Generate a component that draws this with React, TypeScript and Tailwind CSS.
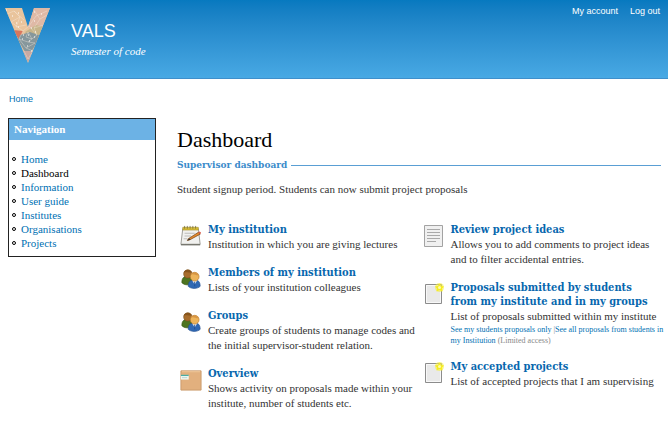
import type { ReactNode } from "react";

const serif = "font-['Liberation_Serif','Times_New_Roman',serif]";
const wideSerif = "font-['DejaVu_Serif_Condensed','DejaVu_Serif',serif]";
const sans = "font-['Liberation_Sans',Arial,sans-serif]";

function Logo() {
  return (
    <svg viewBox="0 0 46 56" className="mt-2 h-[56px] w-[46px] shrink-0" role="img" aria-label="VALS logo">
      <defs>
        <clipPath id="vee">
          <path d="M0 0H17L23 19L29 0H45L23 55Z" />
        </clipPath>
      </defs>
      <g clipPath="url(#vee)">
        <path d="M0 0H46V56H0Z" fill="#e9c49c" />
        <path d="M23 0H46V19L28 24L23 19Z" fill="#dfb9a6" />
        <path d="M20 24L31 17L40 19L34 30L22 27Z" fill="#c6b48a" />
        <path d="M8 22L18 23L14 32Z" fill="#d8765d" />
        <path d="M15 27L25 24L36 28L26 44L20 44L13 32Z" fill="#86979c" />
        <path d="M18 43H28L23 55Z" fill="#c8a9a2" />
        <path
          d="M2 6L9 3L15 9L6 14ZM15 9L11 19L21 17M6 14L18 23L24 18L31 8L42 3M9 3L19 12M29 2L35 11L42 7M35 11L29 20L39 17M18 23L14 31L23 34L32 27L24 18M29 20L32 27M14 31L21 40L30 35L23 34M21 40L28 43L23 51L19 43M23 24L27 31L21 29Z"
          fill="none"
          stroke="#f8eee2"
          strokeWidth="0.6"
          opacity="0.6"
        />
        <path
          d="M1 2h1m5 6h1m5-3h1m-3 10h1m4-1h1m-4 5h1m15-15h1m6 2h1m-8 7h1m-4 7h1m3 4h1m-13 3h1m4 0h1m-7 4h1m6 2h1m4-4h1m-8 9h1m3 5h1"
          stroke="#fff"
          strokeWidth="1"
        />
      </g>
    </svg>
  );
}

function NotepadIcon() {
  return (
    <svg viewBox="0 0 24 24" className="size-[22px]" aria-hidden="true">
      <path d="M3 4H20L22 21H1Z" fill="#f1f1ef" stroke="#96968f" />
      <path d="M1 21.500H22" stroke="#77776f" strokeWidth="1.5" />
      <path d="M3 2.500H20V5.500H3Z" fill="#d8bd35" stroke="#a18b28" strokeWidth="0.6" />
      <path d="M5 1v3m3-3v3m3-3v3m3-3v3m3-3v3" stroke="#6e6637" strokeWidth="0.8" />
      <path d="M5 9H16M5 12H12M4 15H8" stroke="#b7b7b3" />
      <path d="M9 15L20 8L22 10L11 16L8 17Z" fill="#e58a2c" stroke="#784a20" strokeWidth="0.8" />
      <path d="M20 8L22 10L23 8.500L21.500 7Z" fill="#d85a48" />
      <path d="M8 17L10 14.500L11.500 16Z" fill="#333" />
    </svg>
  );
}

function PeopleIcon() {
  return (
    <svg viewBox="0 0 24 24" className="size-[22px]" aria-hidden="true">
      <path d="M2 16C2 10 5 9 8 9C12 9 14 12 14 17C10 19 5 19 2 16Z" fill="#4d7420" stroke="#34540f" strokeWidth="0.7" />
      <circle cx="8.500" cy="6.500" r="4.500" fill="#a86d2c" stroke="#79501d" strokeWidth="0.7" />
      <path d="M4 5C5 1 12 1 13 5C9 5 7 4 4 5Z" fill="#87551c" />
      <path d="M9 20C9 15 11 13 16 13C20 13 22 15 22 20C19 23 12 23 9 20Z" fill="#2f68b3" stroke="#234e8e" strokeWidth="0.7" />
      <path d="M13 13L16 18L19 13Z" fill="#eef4fb" />
      <path d="M16 15V20" stroke="#214d91" />
      <circle cx="16" cy="9.500" r="4.800" fill="#edb45a" stroke="#b7772b" strokeWidth="0.7" />
      <path d="M12 7C13 4 19 4 20 8C17 8 15 6 12 7Z" fill="#d79543" />
    </svg>
  );
}

function FolderIcon() {
  return (
    <svg viewBox="0 0 24 24" className="size-[22px]" aria-hidden="true">
      <path d="M1 2H23V23H1Z" fill="#e2b07e" stroke="#c99a6c" />
      <path d="M2 3H22" stroke="#f0c99f" />
      <path d="M1 6.500H9.500V11.500H1Z" fill="#f4faf6" />
      <path d="M1 7H9.500" stroke="#4bada5" strokeWidth="1.4" />
      <path d="M2 9.500H8" stroke="#b5cfc9" />
    </svg>
  );
}

function DocumentIcon() {
  return (
    <svg viewBox="0 0 22 22" className="size-[22px]" aria-hidden="true">
      <path d="M1.500 0.500H19.500V21.500H1.500Z" fill="#f0f0f0" stroke="#a3a3a3" />
      <path d="M4 4.500H17M4 7.500H17M4 10.500H17M4 13.500H17M4 16.500H13" stroke="#a9a9a9" />
    </svg>
  );
}

function NewPageIcon() {
  return (
    <svg viewBox="0 0 22 22" className="size-[22px] overflow-visible" aria-hidden="true">
      <path d="M2.500 1.500H18.500V20.500H2.500Z" fill="#e9e9e9" stroke="#8c8c8c" />
      <path d="M3.500 2.500H17.500V19.500H3.500Z" fill="none" stroke="#f8f8f8" />
      <circle cx="16.500" cy="4.500" r="4.500" fill="#f5ef45" opacity="0.6" />
      <path d="M16.500 0.500L18 3L21 3.500L19 5.500L19.500 8.500L16.500 7L13.500 8.500L14 5.500L12 3.500L15 3Z" fill="#f5ec22" />
      <circle cx="16.500" cy="4.500" r="1.500" fill="#fdfbb0" />
    </svg>
  );
}

function Item({ icon, title, children }: { icon: ReactNode; title: string; children: ReactNode }) {
  return (
    <li className="flex gap-1.5">
      <span className="w-[22px] shrink-0 pt-0.5">{icon}</span>
      <div className="min-w-0">
        <h3 className={`max-w-[208px] text-[11px] leading-[14px] font-bold ${wideSerif}`}>
          <a href="#" className="text-[#0767ae]">{title}</a>
        </h3>
        {children}
      </div>
    </li>
  );
}

function Desc({ children }: { children: ReactNode }) {
  return <p className="text-[11px] leading-[15px]">{children}</p>;
}

const links = ["Home", "Dashboard", "Information", "User guide", "Institutes", "Organisations", "Projects"];

export default function App() {
  return (
    <div className={`min-h-screen bg-white text-[#333] ${serif}`}>
      <header className="flex h-[79px] items-start border-b border-[#3f8fcb] bg-linear-to-b from-[#0779bf] to-[#48a9e4] pr-2 pl-[5px] text-white">
        <Logo />
        <div className="ml-5 pt-5">
          <h1 className={`text-[18px] leading-[22px] ${sans}`}>VALS</h1>
          <p className="text-[11px] leading-[18px] italic">Semester of code</p>
        </div>
        <nav aria-label="Account" className={`ml-auto flex gap-3 pt-1 text-[9px] leading-[14px] ${sans}`}>
          <a href="#">My account</a>
          <a href="#">Log out</a>
        </nav>
      </header>

      <nav aria-label="Breadcrumb" className={`px-[9px] pt-[13px] text-[9px] leading-[14px] text-[#0071b3] ${sans}`}>
        <a href="#">Home</a>
      </nav>

      <div className="flex gap-[21px] pt-3 pr-[3px] pl-2">
        <aside className="w-[148px] shrink-0 self-start border border-[#222]">
          <h2 className="bg-[#6cb2e5] px-[5px] text-[11px] leading-[21px] font-bold text-white">Navigation</h2>
          <ul className="pt-3 pb-1.5 text-[11px]">
            {links.map((label) => (
              <li key={label} className="flex h-[14px] items-center gap-[5px] pl-[3px] leading-[14px]">
                <span className="size-1 rounded-full border border-black" />
                <a href="#" className={label === "Dashboard" ? "text-black" : "text-[#0071b3]"}>{label}</a>
              </li>
            ))}
          </ul>
        </aside>

        <main className="min-w-0 flex-1 pt-2">
          <h1 className="text-[22px] leading-7 text-black">Dashboard</h1>
          <div className="mt-1 mr-1 flex items-center gap-1">
            <h2 className={`text-[10px] leading-[14px] font-bold text-[#3a8bca] ${wideSerif}`}>Supervisor dashboard</h2>
            <span className="h-px flex-1 bg-[#5a9fd4]" />
          </div>
          <p className="mt-[10px] text-[11px] leading-[15px]">
            Student signup period. Students can now submit project proposals
          </p>

          <div className="mt-[26px] grid grid-cols-2 pl-[3px]">
            <ul className="flex flex-col gap-[14px]">
              <Item icon={<NotepadIcon />} title="My institution">
                <Desc>Institution in which you are giving lectures</Desc>
              </Item>
              <Item icon={<PeopleIcon />} title="Members of my institution">
                <Desc>Lists of your institution colleagues</Desc>
              </Item>
              <Item icon={<PeopleIcon />} title="Groups">
                <Desc>Create groups of students to manage codes and the initial supervisor-student relation.</Desc>
              </Item>
              <Item icon={<FolderIcon />} title="Overview">
                <Desc>Shows activity on proposals made within your institute, number of students etc.</Desc>
              </Item>
            </ul>
            <ul className="flex flex-col gap-[14px]">
              <Item icon={<DocumentIcon />} title="Review project ideas">
                <Desc>Allows you to add comments to project ideas and to filter accidental entries.</Desc>
              </Item>
              <Item icon={<NewPageIcon />} title="Proposals submitted by students from my institute and in my groups">
                <Desc>List of proposals submitted within my institute</Desc>
                <p className="text-[8px] leading-[11px] text-[#888]">
                  <a href="#" className="text-[#0071b3]">See my students proposals only</a> |
                  <a href="#" className="text-[#0071b3]">See all proposals from students in my Institution</a>{" "}
                  (Limited access)
                </p>
              </Item>
              <Item icon={<NewPageIcon />} title="My accepted projects">
                <Desc>List of accepted projects that I am supervising</Desc>
              </Item>
            </ul>
          </div>
        </main>
      </div>
    </div>
  );
}
